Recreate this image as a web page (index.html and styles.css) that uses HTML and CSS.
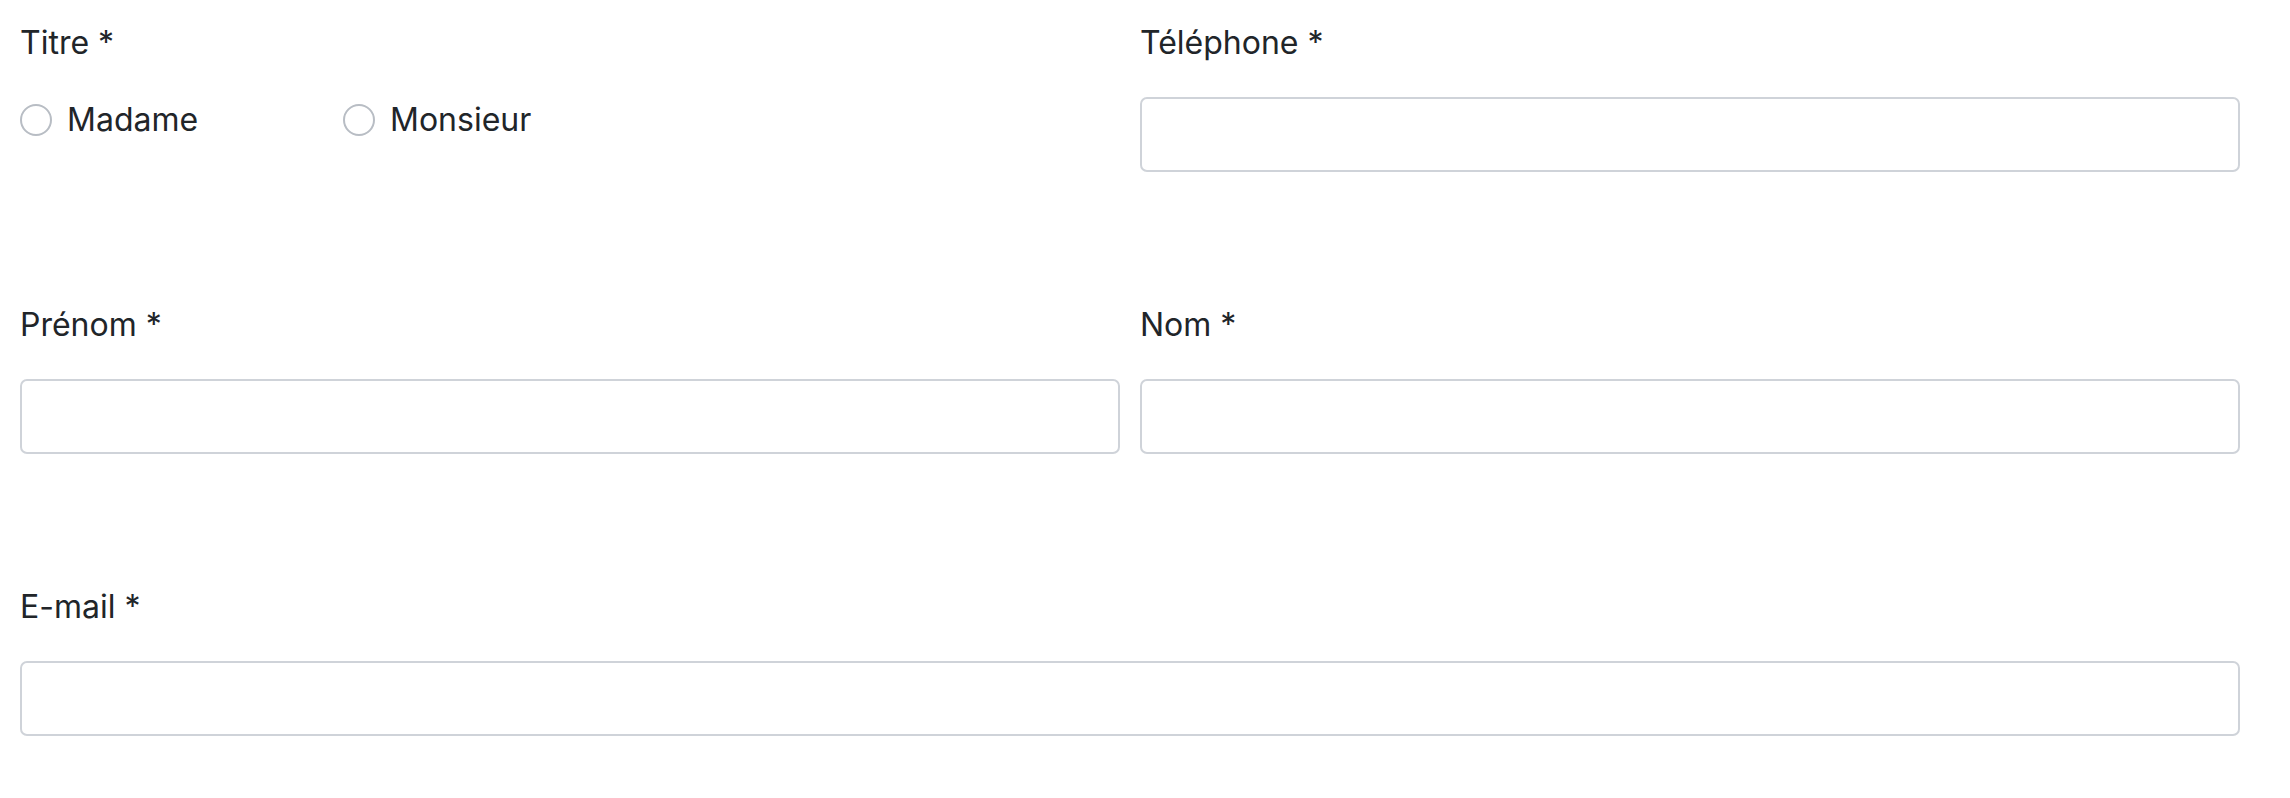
FILE: index.html
```html
<!DOCTYPE html>
<html lang="fr">
<head>
<meta charset="utf-8">
<title>Formulaire</title>
<link rel="stylesheet" href="styles.css">
</head>
<body>
<form class="form">
  <div class="row">
    <div class="field">
      <span class="label">Titre *</span>
      <div class="radios">
        <label class="radio"><span class="dot"></span><span class="radio-text">Madame</span></label>
        <label class="radio"><span class="dot"></span><span class="radio-text">Monsieur</span></label>
      </div>
    </div>
    <div class="field">
      <label class="label">Téléphone *</label>
      <div class="input"></div>
    </div>
  </div>
  <div class="row">
    <div class="field">
      <label class="label">Prénom *</label>
      <div class="input"></div>
    </div>
    <div class="field">
      <label class="label">Nom *</label>
      <div class="input"></div>
    </div>
  </div>
  <div class="row row-full">
    <div class="field">
      <label class="label">E-mail *</label>
      <div class="input"></div>
    </div>
  </div>
</form>
</body>
</html>
```
FILE: styles.css
```css
html, body {
  margin: 0;
  padding: 0;
  background: #ffffff;
}
body {
  font-family: Inter, "Noto Sans", sans-serif;
  color: #212529;
}
.form {
  width: 2220px;
  padding: 17px 0 0 20px;
  display: flex;
  flex-direction: column;
  gap: 127px;
}
.row {
  display: grid;
  grid-template-columns: 1fr 1fr;
  column-gap: 20px;
}
.row-full {
  grid-template-columns: 1fr;
}
.field {
  display: flex;
  flex-direction: column;
}
.label {
  display: block;
  font-size: 32px;
  line-height: 48px;
  padding-top: 2px;
  margin-bottom: 30px;
}
.input {
  box-sizing: border-box;
  height: 75px;
  border: 2px solid #cfd3d9;
  border-radius: 7px;
  background: #fff;
}
.radios {
  display: flex;
  margin-top: -1px;
}
.radio {
  display: flex;
  align-items: center;
  width: 323px;
  gap: 15px;
}
.dot {
  box-sizing: border-box;
  width: 32px;
  height: 32px;
  border: 2px solid #b8bdc4;
  border-radius: 50%;
  flex: none;
}
.radio-text {
  font-size: 32px;
  line-height: 48px;
}
```
